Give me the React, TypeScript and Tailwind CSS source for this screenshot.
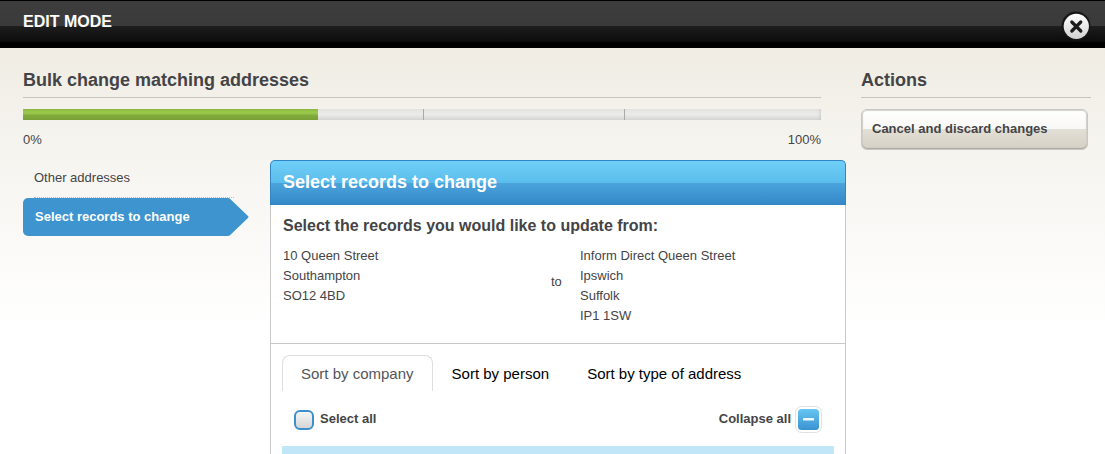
const steps = [
  { name: 'Other addresses', active: false },
  { name: 'Select records to change', active: true },
];

const tabs = ['Sort by company', 'Sort by person', 'Sort by type of address'];

const oldAddress = ['10 Queen Street', 'Southampton', 'SO12 4BD'];
const newAddress = ['Inform Direct Queen Street', 'Ipswich', 'Suffolk', 'IP1 1SW'];

const TopBar = () => (
  <header className="flex h-12 items-start justify-between border-t border-black bg-[linear-gradient(#3d3d3d_0,#3a3a3a_25px,#1e1e1e_25px,#0b0b0b_41px,#000_41px)] pl-[23px] pr-3.5">
    <span className="pt-[9px] text-[16px] leading-6 font-bold text-white">EDIT MODE</span>
    <button type="button" aria-label="Close" className="mt-2.5">
      <svg width="30" height="30" viewBox="0 0 30 30">
        <defs>
          <linearGradient id="close" x1="0" y1="0" x2="0" y2="1">
            <stop offset="0" stopColor="#ffffff" />
            <stop offset="1" stopColor="#d2d2d2" />
          </linearGradient>
        </defs>
        <circle cx="15" cy="15" r="14.5" fill="#161616" />
        <circle cx="15.3" cy="15.3" r="12.6" fill="url(#close)" />
        <path d="M10.8 11l9 9M19.8 11l-9 9" stroke="#1c1c1c" strokeWidth="3.2" strokeLinecap="round" />
      </svg>
    </button>
  </header>
);

const Progress = () => (
  <div className="mr-[25px]">
    <div
      role="progressbar"
      aria-label="Progress"
      aria-valuenow={37}
      aria-valuemin={0}
      aria-valuemax={100}
      className="relative mt-[11px] h-[11px] bg-linear-to-b from-[#e5e4e1] via-[#ebebea] to-[#d6d5d2] shadow-[inset_-3px_0_4px_-3px_#bbb]"
    >
      <div className="absolute inset-y-0 left-1/2 ml-px w-px bg-[#a9a9a9]" />
      <div className="absolute inset-y-0 left-3/4 ml-0.5 w-px bg-[#a9a9a9]" />
      <div className="relative h-full w-[37%] bg-[linear-gradient(#8cb543_0,#9ac94a_3px,#97c448_5px,#83ad3c_6px,#789f36_100%)]" />
    </div>
    <div className="mt-[11px] flex justify-between leading-[18px]">
      <span>0%</span>
      <span>100%</span>
    </div>
  </div>
);

const Steps = () => (
  <nav className="w-[247px] shrink-0 pt-1">
    <ul>
      {steps.map((step) =>
        step.active ? (
          <li key={step.name} className="flex">
            <a
              href="#records"
              aria-current="step"
              className="flex h-[38px] w-[205px] items-center rounded-l-[5px] bg-[#3d94cf] pl-3 font-bold text-white"
            >
              {step.name}
            </a>
            <svg width="21" height="38" viewBox="0 0 21 38">
              <path d="M0 0Q1.2 0 2.2 1L20 17.9Q21 19 20 20.1L2.2 37Q1.2 38 0 38Z" fill="#3d94cf" />
            </svg>
          </li>
        ) : (
          <li key={step.name} className="mr-9 ml-[11px] border-b border-dotted border-[#bbb] pb-1.5">
            <a href="#addresses" className="block leading-[27px]">
              {step.name}
            </a>
          </li>
        )
      )}
    </ul>
  </nav>
);

const AddressLines = ({ lines }: { lines: string[] }) => (
  <address className="not-italic leading-5">
    {lines.map((line) => (
      <div key={line}>{line}</div>
    ))}
  </address>
);

const Records = () => (
  <section id="records" className="flex min-w-0 flex-1 flex-col">
    <h2 className="flex h-[45px] items-center rounded-t-[5px] border border-b-0 border-[#3085c6] bg-[linear-gradient(#70cff8_0,#5bbdec_50%,#4ba4dc_50%,#3387c6_100%)] pb-0.5 pl-3 text-[18px] font-bold text-white">
      Select records to change
    </h2>
    <div className="flex flex-1 flex-col border-x border-[#c9c9cb] bg-white">
      <div className="border-b border-[#c9c9cb] px-3 pt-[9px] pb-[17px]">
        <h3 className="text-[16px] leading-6 font-bold">Select the records you would like to update from:</h3>
        <div className="mt-2 flex">
          <div className="w-[268px]">
            <AddressLines lines={oldAddress} />
          </div>
          <span className="w-[29px] self-center pb-2">to</span>
          <AddressLines lines={newAddress} />
        </div>
      </div>
      <div className="flex flex-1 flex-col px-[11px] pt-[11px]">
        <div role="tablist" className="flex text-[15px] text-black">
          {tabs.map((tab, i) => (
            <button
              key={tab}
              type="button"
              role="tab"
              aria-selected={i === 0}
              className={
                i === 0
                  ? 'h-9 rounded-t-lg border border-b-0 border-[#dddde2] px-[18px] pt-px text-[#55555b]'
                  : 'h-9 px-[19px] pt-0.5'
              }
            >
              {tab}
            </button>
          ))}
        </div>
        <div className="flex items-center justify-between px-3 pt-[15px] pb-[13px] font-bold">
          <label className="flex items-center gap-1.5">
            <input
              type="checkbox"
              className="size-5 appearance-none rounded-[6px] border-2 border-[#3d90cb] bg-linear-to-b from-[#f7f7f7] to-[#d5d5d5]"
            />
            <span className="pb-0.5">Select all</span>
          </label>
          <button type="button" className="flex items-center gap-1">
            <span className="pb-0.5">Collapse all</span>
            <svg width="27" height="27" viewBox="0 0 27 27">
              <defs>
                <linearGradient id="collapse" x1="0" y1="0" x2="0" y2="1">
                  <stop offset="0" stopColor="#67c6f2" />
                  <stop offset="1" stopColor="#3a92d0" />
                </linearGradient>
              </defs>
              <rect x="0.5" y="0.5" width="26" height="26" rx="6" fill="#fff" stroke="#e0e0e3" />
              <rect x="3" y="3" width="21" height="21" rx="3.5" fill="url(#collapse)" />
              <rect x="8" y="12" width="11" height="2.5" rx="0.5" fill="#eef8fe" />
            </svg>
          </button>
        </div>
        <div className="min-h-2 flex-1 bg-[#c0e6f8]" />
      </div>
    </div>
  </section>
);

export default function App() {
  return (
    <div className="flex min-h-screen flex-col bg-[linear-gradient(#f0ece3_48px,#f4f2ec_120px,#fff_330px)] font-['Liberation_Sans',Arial,sans-serif] text-[13px] text-[#444446]">
      <TopBar />
      <div className="flex flex-1 gap-[15px] pt-5 pr-3.5 pl-[23px]">
        <main className="flex min-w-0 flex-1 flex-col">
          <h1 className="mr-[25px] border-b border-[#c6c4be] pb-[5px] text-[18px] leading-6 font-bold">
            Bulk change matching addresses
          </h1>
          <Progress />
          <div className="mt-[11px] flex flex-1 items-stretch">
            <Steps />
            <Records />
          </div>
        </main>
        <aside className="w-[230px] shrink-0">
          <h2 className="border-b border-[#c6c4be] pb-[5px] text-[18px] leading-6 font-bold">Actions</h2>
          <div className="pt-[11px] pr-[3px]">
            <button
              type="button"
              className="h-[41px] w-full rounded-[6px] border border-[#c9c7c3] bg-[linear-gradient(#fff_0,#f8f7f5_50%,#e2dfd6_50%,#d6d0c4_100%)] px-2.5 pb-0.5 text-left font-bold shadow-[inset_0_-1px_1px_#a9a7a3,inset_0_0_1px_1px_#d5d3cf]"
            >
              Cancel and discard changes
            </button>
          </div>
        </aside>
      </div>
    </div>
  );
}
